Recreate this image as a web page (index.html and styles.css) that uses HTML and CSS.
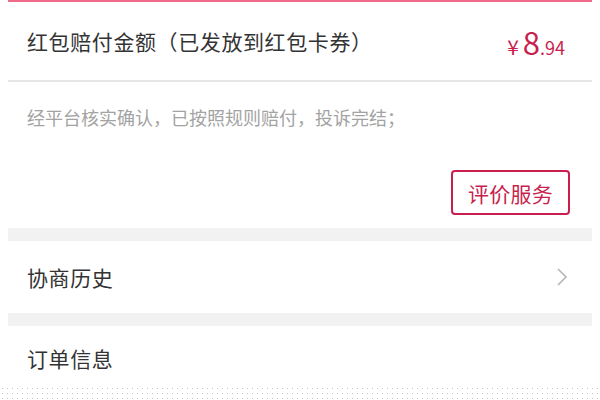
FILE: index.html
```html
<!DOCTYPE html>
<html lang="zh-CN">
<head>
    <meta charset="UTF-8">
    <meta name="viewport" content="width=device-width, initial-scale=1.0">
    <title>投诉详情</title>
    <link rel="stylesheet" href="styles.css">
</head>
<body>
    <div class="page">
        <div class="top-line"></div>

        <div class="row amount-row">
            <span class="row-title">红包赔付金额（已发放到红包卡券）</span>
            <span class="price"><span class="yen">¥</span><span class="int">8</span><span class="dec">.94</span></span>
        </div>

        <div class="result">
            <p class="result-text">经平台核实确认，已按照规则赔付，投诉完结；</p>
            <div class="actions">
                <button class="rate-btn">评价服务</button>
            </div>
        </div>

        <div class="gap"></div>

        <div class="row link-row">
            <span class="row-title">协商历史</span>
            <svg class="chevron" width="12" height="20" viewBox="0 0 12 20">
                <path d="M2 2 L10 10 L2 18" fill="none" stroke="#b5b5b5" stroke-width="1.6"/>
            </svg>
        </div>

        <div class="gap"></div>

        <div class="row info-row">
            <span class="row-title">订单信息</span>
        </div>
    </div>
    <div class="dots"></div>
</body>
</html>
```

FILE: styles.css
```css
:root {
    --brand: #c81f4f;
    --text-main: #333333;
    --text-sub: #a3a3a3;
    --gap-bg: #f2f2f2;
}

* {
    margin: 0;
    padding: 0;
    box-sizing: border-box;
    font-family: "Noto Sans CJK SC", "Noto Sans", sans-serif;
}

body {
    background-color: #ffffff;
    width: 600px;
    height: 400px;
    overflow: hidden;
    position: relative;
}

.page {
    margin: 0 8px;
}

.top-line {
    height: 2px;
    background-color: #f06a8a;
}

.row {
    display: flex;
    align-items: center;
    justify-content: space-between;
    padding: 0 19px;
}

.row-title {
    font-size: 21px;
    color: var(--text-main);
    letter-spacing: 0.6px;
}

.amount-row {
    height: 80px;
    border-bottom: 2px solid #e6e6e6;
    padding-right: 27px;
}

.price {
    color: var(--brand);
    font-family: "Liberation Sans", Arial, sans-serif;
    display: flex;
    align-items: baseline;
}

.price .yen {
    font-size: 21px;
    margin-right: 4px;
}

.price .int {
    font-size: 31px;
}

.price .dec {
    font-size: 18px;
}

.result {
    padding: 23px 22px 13px 19px;
}

.result-text {
    font-size: 18px;
    line-height: 25px;
    color: var(--text-sub);
}

.actions {
    display: flex;
    justify-content: flex-end;
    margin-top: 40px;
}

.rate-btn {
    width: 119px;
    height: 45px;
    border: 2px solid var(--brand);
    border-radius: 4px;
    background-color: #ffffff;
    color: var(--brand);
    font-size: 21px;
    letter-spacing: 0.3px;
}

.gap {
    height: 13px;
    background-color: var(--gap-bg);
}

.link-row {
    height: 72px;
    padding-right: 24px;
}

.info-row {
    height: 64px;
}

.dots {
    position: absolute;
    left: 0;
    bottom: 0;
    width: 600px;
    height: 14px;
    background-image: radial-gradient(circle, #c4c4c4 0.7px, transparent 1px);
    background-size: 5px 5px;
}
```
